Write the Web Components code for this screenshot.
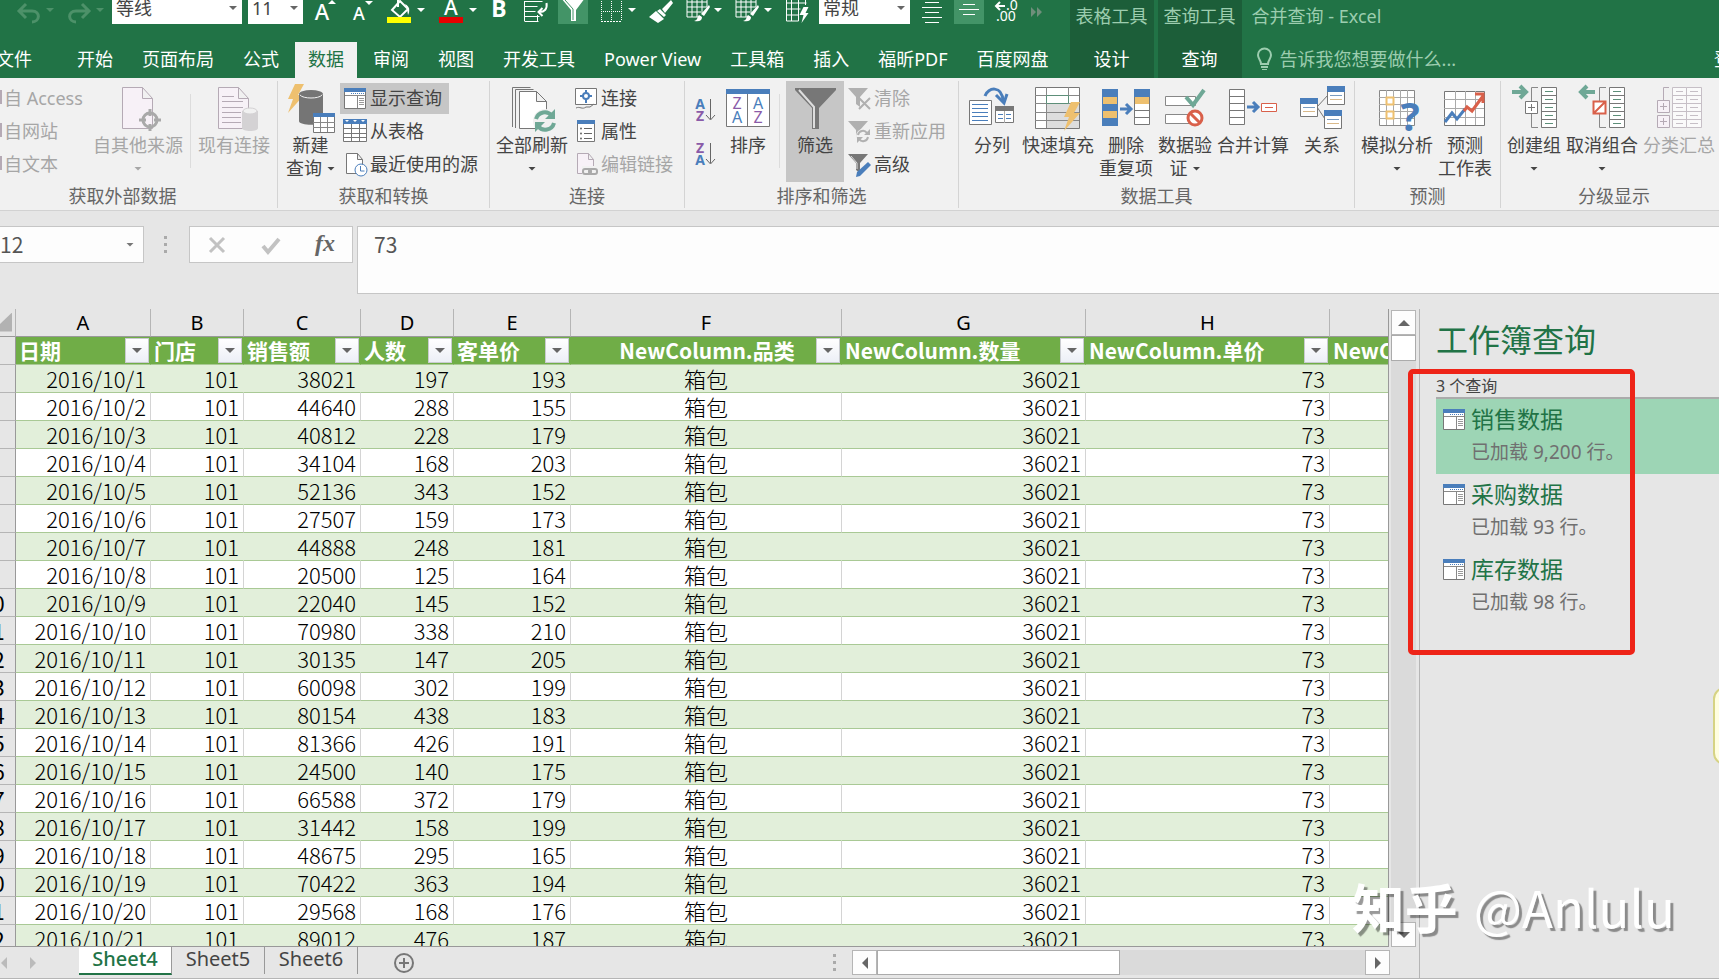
<!DOCTYPE html>
<html lang="zh-CN">
<head>
<meta charset="UTF-8">
<title>合并查询 - Excel</title>
<style>
  html, body { margin: 0; height: 100%; }
  body {
    background: #e6e6e6;
    color: #444;
    font: 18px/24px "Noto Sans", "Noto Sans CJK SC", sans-serif;
    overflow: hidden;
  }
</style>
</head>
<body>
<excel-app>
  <app-header slot="header"></app-header>
  <excel-ribbon slot="ribbon">
    <ribbon-group label="获取外部数据" style="--w: 278px; --pad: 0; --gap: 7px; --label-pad: 32px">
      <ribbon-column style="--w: 86px">
        <small-button icon="sliver" cut off>自 Access</small-button>
        <small-button icon="sliver" cut off>自网站</small-button>
        <small-button icon="sliver" cut off>自文本</small-button>
      </ribbon-column>
      <big-button icon="source" off caret>自其他来源</big-button>
      <ribbon-line></ribbon-line>
      <big-button icon="existing" off>现有连接</big-button>
    </ribbon-group>
    <ribbon-group label="获取和转换" style="--w: 212px; --pad: 8px; --gap: 5px">
      <big-button icon="newquery" line2="查询" caret narrow>新建</big-button>
      <ribbon-column>
        <small-button icon="pane" active>显示查询</small-button>
        <small-button icon="table">从表格</small-button>
        <small-button icon="recent">最近使用的源</small-button>
      </ribbon-column>
    </ribbon-group>
    <ribbon-group label="连接" style="--w: 195px; --pad: 6px; --gap: 3px">
      <big-button icon="refresh" caret>全部刷新</big-button>
      <ribbon-column>
        <small-button icon="link">连接</small-button>
        <small-button icon="props">属性</small-button>
        <small-button icon="editlink" off>编辑链接</small-button>
      </ribbon-column>
    </ribbon-group>
    <ribbon-group label="排序和筛选" style="--w: 274px; --pad: 8px; --gap: 6px">
      <sort-buttons></sort-buttons>
      <big-button icon="sort">排序</big-button>
      <ribbon-line></ribbon-line>
      <ribbon-row>
        <big-button icon="filter" active>筛选</big-button>
        <ribbon-column>
          <small-button icon="clear" off>清除</small-button>
          <small-button icon="reapply" off>重新应用</small-button>
          <small-button icon="advanced">高级</small-button>
        </ribbon-column>
      </ribbon-row>
    </ribbon-group>
    <ribbon-group label="数据工具" style="--w: 396px; --pad: 8px; --gap: 5px">
      <big-button icon="split">分列</big-button>
      <big-button icon="flash">快速填充</big-button>
      <big-button icon="dedupe" line2="重复项">删除</big-button>
      <big-button icon="validate" line2="证" caret>数据验</big-button>
      <big-button icon="consolidate">合并计算</big-button>
      <big-button icon="relation" wide>关系</big-button>
    </ribbon-group>
    <ribbon-group label="预测" style="--w: 146px; --pad: 6px; --gap: 5px">
      <big-button icon="whatif" caret>模拟分析</big-button>
      <big-button icon="forecast" line2="工作表">预测</big-button>
    </ribbon-group>
    <ribbon-group label="分级显示" style="--w: 227px; --pad: 6px; --gap: 5px">
      <big-button icon="group" caret>创建组</big-button>
      <big-button icon="ungroup" caret>取消组合</big-button>
      <big-button icon="subtotal" off>分类汇总</big-button>
    </ribbon-group>
  </excel-ribbon>
  <formula-bar slot="formula"></formula-bar>
  <sheet-grid slot="sheet"></sheet-grid>
  <query-pane slot="pane" heading="工作簿查询" count="3 个查询">
    <query-item name="销售数据" selected>已加载 9,200 行。</query-item>
    <query-item name="采购数据">已加载 93 行。</query-item>
    <query-item name="库存数据">已加载 98 行。</query-item>
  </query-pane>
</excel-app>

<script>
  const BLUE = '#4a7ebb';
  const GOLD = '#eec06f';
  const GREEN = '#6fa896';
  const RED = '#d9604a';

  const BOLT = 'M8 0h9l-6 11h6L1 29l5-14H1z';
  const FUNNEL = 'M1 2h20l-8 9v10l-4-3v-7z';
  const TABLE_PENCIL = `<g stroke="#fff" fill="none"><path d="M2 0v20h14M2 5h20M2 10h20M2 15h16M7 0v20M12 0v20M17 0v14M22 0v10"/></g>
    <path d="M24 8l-8 9 3 2 6-9zM14 18c-2 2-1 5-5 6 5 1 8 0 8-4z" fill="#fff"/>`;

  // five stacked cells, used by the outline and data tool icons
  const cells = (x, y, w, h, stroke, dash) => {
    let s = `<g stroke="${stroke}" fill="#fff"><path d="M${x}.5 ${y}.5h${w}v${h * 5}h-${w}z"/>`;
    for (let i = 1; i < 5; i++) s += `<path d="M${x} ${y + h * i}.5h${w}"/>`;
    if (dash) for (let i = 0; i < 5; i++) s += `<path d="M${x + 4} ${y + h * i + 4}.5h${w - 7}" stroke="${dash}"/>`;
    return s + '</g>';
  };
  const win = (x, y) => `<path d="M${x}.5 ${y}.5h17v18h-17z" fill="#fff" stroke="#777"/><path d="M${x} ${y}h18v6h-18z" fill="${BLUE}"/>
    <path d="M${x + 3} ${y + 9}.5h12" stroke="#7a9cc0"/><path d="M${x + 3} ${y + 13}.5h12" stroke="#d9b98a"/>`;
  const letter = (ch, x, y, color, size, weight = 400) =>
    `<text x="${x}" y="${y}" font-size="${size}" font-weight="${weight}" fill="${color}" text-anchor="middle" font-family="Noto Sans, sans-serif">${ch}</text>`;

  const icons = {
    // quick access toolbar, 26 x 26
    undo: `<path d="M4 14h12c9 0 8 11 0 11M10 7l-7 7 7 7" fill="none" stroke="#4d9169" stroke-width="3"/>`,
    redo: `<path d="M22 14H10c-9 0-8 11 0 11M16 7l7 7-7 7" fill="none" stroke="#4d9169" stroke-width="3"/>`,
    grow: letter('A', 12, 23, '#fff', 22, 500) + '<path d="M18 7l4-4 4 4z" fill="#fff"/>',
    shrink: letter('A', 13, 23, '#fff', 18, 500) + '<path d="M19 4h8l-4 4z" fill="#fff"/>',
    fill: `<path d="M6 13l8-9 8 8-8 8zM12 2v8" fill="none" stroke="#fff" stroke-width="2"/><path d="M19 7c5 2 5 8 3 11-1-5-1-8-3-11z" fill="#fff"/><path d="M1 20h24v6H1z" fill="#ff0"/>`,
    color: letter('A', 13, 18, '#fff', 21, 500) + '<path d="M1 20h24v6H1z" fill="#e60000"/>',
    bold: letter('B', 13, 20, '#fff', 23, 700),
    wrap: `<path d="M2 4.500h18M2 9.500h13M2 14.500h11M2 19.500h15M2 24.500h14M2 4v20M15 18v6" stroke="#fff" fill="none"/><path d="M24 6c1 6-2 9-7 9M20 11l-4 4 4 4" stroke="#fff" stroke-width="2" fill="none"/>`,
    funnel: `<path d="M1 3h24l-9 12v11h-5V15z" fill="#fff"/><path d="M5 5l8 9v11" stroke="#439467" fill="none"/>`,
    borders: `<path d="M3.500 0v24M13.500 0v24M23.500 0v24M3 14.500h20" stroke="#fff" stroke-dasharray="1 1" fill="none"/><path d="M3 24.500h21" stroke="#fff" stroke-dasharray="2 1"/>`,
    brush: `<path d="M24 3l-9 9 3 4 8-10zM13 12l6 6-2 2-7-6zM9 14l8 8-6 4-9-6z" fill="#fff"/>`,
    tablepen: TABLE_PENCIL,
    tablebolt: `<path d="M3 0v24h12M3 6h20M3 12h14M3 18h12M8 0v24M15 0v24M22 0v8" stroke="#fff" fill="none"/><path d="M20 10h5l-3 6h3l-7 10 2-8h-4z" fill="#fff"/>`,
    center: `<path d="M6 5.500h14M3 10.500h20M6 15.500h14M3 20.500h20M6 25.500h14" stroke="#fff"/>`,
    middle: `<path d="M7 9.500h12M3 14.500h20M7 19.500h12" stroke="#fff"/>`,
    decimals: `<path d="M13 9H4M8 5L4 9l4 4" stroke="#fff" stroke-width="2" fill="none"/>` + letter('.0', 20, 13, '#fff', 14) + letter('.00', 14, 24, '#fff', 14),
    more: `<path d="M8 10l5 5-5 5zM14 10l5 5-5 5z" fill="#6f8f7b"/>`,
    bulb: `<path d="M9 17c0-4-3-5-3-9a6 6 0 0 1 13 0c0 4-3 5-3 9z" fill="none" stroke="#9ccdaf" stroke-width="2"/><path d="M9 19h7v2H9zM10 22h5v1h-5z" fill="#9ccdaf"/>`,

    // large ribbon icons, 48 x 49
    source: `<path d="M8.500 2.500h20l10 11v30h-30zM28.500 2.500v11h10" fill="#f7f1f7" stroke="#b5aab5"/>
      <circle cx="36" cy="35" r="7" fill="none" stroke="#a9a9a9" stroke-width="3"/><path d="M36 24v7M36 39v7M25 35h7M40 35h7" stroke="#a9a9a9" stroke-width="3"/>`,
    existing: `<path d="M8.500 2.500h20l10 11v30h-30zM28.500 2.500v11h10" fill="#f7f1f7" stroke="#b5aab5"/>
      <path d="M12 11.500h12M12 16.500h21M12 22.500h21M12 27.500h19M12 32.500h19M12 37.500h19" stroke="#b5aab5"/>
      <path d="M32 26v17c0 4 16 4 16 0V26z" fill="#d4d2d4"/><ellipse cx="40" cy="26" rx="7" ry="3" fill="#f1f1f1" stroke="#d4d2d4"/>`,
    newquery: `<path d="${BOLT}" transform="translate(0 -1)" fill="${GOLD}"/>
      <path d="M12 10v26c0 5 24 5 24 0V10z" fill="#757575"/><ellipse cx="24" cy="9" rx="12" ry="4" fill="#757575"/><path d="M13 10c3 4 19 4 22 0" stroke="#f1f1f1" fill="none"/>
      <path d="M26.500 28.500h21v19h-21z" fill="#fff" stroke="#777"/><path d="M26 28h22v4H26z" fill="${BLUE}"/><path d="M26 37.500h22M26 42.500h22M33.500 32v15M40.500 32v15" stroke="#888"/>`,
    refresh: `<path d="M4.500 42V2.500h18M7.500 43V4.500h18" fill="none" stroke="#777"/><path d="M11.500 6.500h17l10 10v27h-27zM28.500 6.500v10h10" fill="#fff" stroke="#777"/>
      <circle cx="37" cy="36" r="12" fill="#f1f1f1"/><path d="M28 34a9 9 0 0 1 16-3M46 38a9 9 0 0 1-16 3" fill="none" stroke="${GREEN}" stroke-width="4"/><path d="M47 24v10H37zM27 47V37h10z" fill="${GREEN}"/>`,
    sort: `<path d="M2.500 4.500h43v37h-43zM23.500 9v32" fill="#fff" stroke="#777"/><path d="M2 4h44v5H2z" fill="${BLUE}"/>`
      + letter('Z', 13, 24, '#8a5ba8', 16) + letter('A', 13, 38, BLUE, 16) + letter('A', 34, 24, BLUE, 16) + letter('Z', 34, 38, '#8a5ba8', 16),
    filter: `<path d="M4 3h41v2L28 23v21h-7V23L4 5z" fill="#777"/><path d="M8 5l15 17v21" stroke="#ddd" stroke-width="2" fill="none"/>`,
    split: `<path d="M1.500 15.500h22v24h-22z" fill="#fff" stroke="#777"/><path d="M4 19.500h16M4 23.500h16M4 27.500h16M4 31.500h16M4 35.500h16" stroke="${BLUE}"/>
      <path d="M17 11c3-9 17-11 18 5" fill="none" stroke="${BLUE}" stroke-width="3"/><path d="M28 10l8 8 3-9" fill="none" stroke="${BLUE}" stroke-width="3"/>
      <path d="M27.500 21.500h18v16h-18z" fill="#fff" stroke="#777"/><path d="M27 21h19v5H27z" fill="#777"/><path d="M30 29.500h5M38 29.500h5M30 33.500h5M38 33.500h5" stroke="${BLUE}"/><path d="M36.500 26v12" stroke="#aaa"/>`,
    flash: `<path d="M1.500 2.500h44v41h-44z" fill="#fff" stroke="#777"/><path d="M12 19h33v24H12z" fill="#ddd"/>
      <path d="M1 10.500h44M1 18.500h44M1 27.500h44M1 35.500h44M12.500 2v41M34.500 2v17" stroke="#888" fill="none"/><path d="M12.500 10.500h22v8h-22z" fill="#fff" stroke="#5d8f79"/>
      <path d="${BOLT}" transform="translate(29 17)" fill="${GOLD}"/>`,
    dedupe: `<path d="M0 4h16v37H0z" fill="${BLUE}"/><path d="M1 12h14v7H1zM1 26h14v7H1z" fill="${GOLD}"/>
      <path d="M18 24h10M24 19l5 5-5 5" stroke="${BLUE}" stroke-width="3" fill="none"/>` + cells(32, 4, 15, 7, '#777')
      + `<path d="M32 4h16v8H32z" fill="${BLUE}"/><path d="M33 12h14v7H33z" fill="${GOLD}"/>`,
    validate: `<path d="M4.500 11.500h30v9h-30zM4.500 29.500h28v9h-28z" fill="#fff" stroke="#888"/><path d="M25 12l7 8L43 5" fill="none" stroke="${GREEN}" stroke-width="4"/>
      <circle cx="34" cy="33" r="7" fill="#fff" stroke="${RED}" stroke-width="3"/><path d="M29 28l10 10" stroke="${RED}" stroke-width="3"/>`,
    consolidate: cells(0, 4, 15, 7, '#777') + `<path d="M18 22h10M24 17l5 5-5 5" stroke="${BLUE}" stroke-width="3" fill="none"/>
      <path d="M32.500 18.500h15v8h-15z" fill="#fff" stroke="${RED}"/><path d="M36 22.500h8" stroke="${RED}"/>`,
    relation: `<path d="M19 22L30 10M19 22l8 12" stroke="#777"/>` + win(2, 13) + win(29, 1) + win(26, 25),
    whatif: `<path d="M6.500 5.500h35v35h-35z" fill="#fff" stroke="#888"/><path d="M6 12.500h35M6 19.500h35M6 26.500h35M6 33.500h35M13.500 5v35M20.500 5v35M27.500 5v35M34.500 5v35" stroke="#aaa"/>
      <path d="M13.500 12.500h7v7h-7zM13.500 26.500h7v7h-7z" fill="#fff" stroke="${GOLD}" stroke-width="2"/>` + letter('?', 37, 46, BLUE, 40, 700),
    forecast: `<path d="M3.500 6.500h40v34h-40z" fill="#fff" stroke="#777"/><path d="M3 14.500h40M3 23.500h40M3 32.500h40M14.500 6v34M24.500 6v34M34.500 6v34" stroke="#aaa"/>
      <path d="M4 37l7-9 5 6 8-10" fill="none" stroke="${BLUE}" stroke-width="3"/><path d="M23 26l3-4 5 4 11-15M34 9h8v9" fill="none" stroke="${RED}" stroke-width="3"/>`,
    group: `<path d="M2 7h13M10 1l6 6-6 6" stroke="${GREEN}" stroke-width="4" fill="none"/><path d="M28 2.500h-6.500V16M21.500 28v14.500H28" stroke="#888" fill="none"/>
      <path d="M15.500 16.500h12v12h-12z" fill="#fff" stroke="#777"/><path d="M18 22.500h7M21.500 19v7" stroke="#777"/>` + cells(31, 2, 15, 8, '#777', '#5d8f79'),
    ungroup: `<path d="M17 7H4M9 1L3 7l6 6" stroke="${GREEN}" stroke-width="4" fill="none"/><path d="M28 2.500h-6.500V16M21.500 28v14.500H28" stroke="#888" fill="none"/>
      <path d="M15.500 16.500h12v12h-12zM15.500 28.500l12-12" fill="#fff" stroke="${RED}" stroke-width="2"/>` + cells(31, 2, 15, 8, '#777', '#5d8f79'),
    subtotal: `<path d="M14 2.500H8.500V15" stroke="#b5aab5" fill="none"/><path d="M2.500 15.500h12v12h-12zM2.500 30.500h12v12h-12zM5 21.500h7M8.500 18v7M5 36.500h7M8.500 33v7" fill="#f7f1f7" stroke="#b5aab5"/>
      <g opacity=".7">` + cells(17, 2, 14, 8, '#b5aab5', '#b5aab5') + cells(31, 2, 15, 8, '#b5aab5', '#b5aab5') + '</g>',

    // small ribbon icons, 24 x 24
    sliver: `<path d="M0 4h2v14H0z" fill="#b5aab5"/>`,
    pane: `<path d="M1.500 2.500h21v20h-21z" fill="#fff" stroke="#777"/><path d="M1 2h22v4H1z" fill="${BLUE}"/><path d="M8 7.500h13" stroke="${BLUE}" stroke-dasharray="1 1"/>
      <path d="M2 9.500h20M14.500 10v12" stroke="#888"/><path d="M16 12.500h5M16 14.500h5M16 16.500h5M16 18.500h5" stroke="#999"/>`,
    table: `<path d="M.500 1.500h23v21H.500z" fill="#fff" stroke="#777"/><path d="M0 0h24v5H0z" fill="${BLUE}"/><path d="M2 1h4L4 3zM10 1h4l-2 2zM18 1h4l-2 2z" fill="#fff"/>
      <path d="M0 9.500h24M0 14.500h24M0 18.500h24M8.500 5v18M16.500 5v18" stroke="#777"/>`,
    recent: `<path d="M3.500 1.500h11l5 6v14h-16zM14.500 1.500v6h5" fill="#fff" stroke="#777"/><circle cx="18" cy="18" r="6" fill="#fff" stroke="${BLUE}"/><path d="M17.500 14v5h4" stroke="${BLUE}" fill="none"/>`,
    link: `<path d="M1.500 2.500h21v16h-21z" fill="#fff" stroke="#777"/><circle cx="12" cy="10" r="3" fill="none" stroke="${BLUE}" stroke-width="2"/><path d="M12 4v4M12 12v5M6 10h3M15 10h3" stroke="${BLUE}" stroke-width="2"/><path d="M2 22c4-2 6 2 10-1h4l4-3" stroke="#777" fill="none"/>`,
    props: `<path d="M3.500 2.500h17v20h-17z" fill="#fff" stroke="#777"/><path d="M3 1h18v4H3z" fill="${BLUE}"/><path d="M10 9.500h8M10 14.500h8M10 19.500h8" stroke="#666"/><circle cx="7" cy="9.500" r="1" fill="#666"/><circle cx="7" cy="14.500" r="1" fill="#666"/><circle cx="7" cy="19.500" r="1" fill="#666"/>`,
    editlink: `<path d="M3.500 1.500h11l5 6v14h-16zM14.500 1.500v6h5" fill="#f7f1f7" stroke="#b5aab5"/><path d="M8 14h16v9H8z" fill="#f1f1f1"/><rect x="9" y="17" width="8" height="5" rx="2" fill="none" stroke="#a9a9a9" stroke-width="2"/><rect x="15" y="17" width="8" height="5" rx="2" fill="none" stroke="#a9a9a9" stroke-width="2"/>`,
    clear: `<path d="${FUNNEL}" fill="#b0b0b0"/><path d="M12 12l11 11M23 12L12 23" stroke="#b0b0b0" stroke-width="2"/>`,
    reapply: `<path d="${FUNNEL}" fill="#b0b0b0"/><circle cx="16" cy="17" r="7" fill="#f1f1f1"/><path d="M11 16a5 5 0 0 1 9-2M21 18a5 5 0 0 1-9 2" stroke="#b0b0b0" stroke-width="2" fill="none"/><path d="M23 10v6h-6zM10 24v-6h6z" fill="#b0b0b0"/>`,
    advanced: `<path d="${FUNNEL}" fill="#777"/><path d="M4 4l6 7v6" stroke="#ddd" fill="none"/><path d="M21 10l3 3-11 11-4 1 1-5z" fill="${BLUE}"/>`,
    az: letter('A', 7, 11, BLUE, 14, 700) + letter('Z', 7, 23, '#8a5ba8', 14, 700) + '<path d="M17.500 1v20M13 17l4.500 5 4.500-5" stroke="#666" fill="none"/>',
    za: letter('Z', 7, 11, '#8a5ba8', 14, 700) + letter('A', 7, 23, BLUE, 14, 700) + '<path d="M17.500 1v20M13 17l4.500 5 4.500-5" stroke="#666" fill="none"/>',
    cancel: '<path d="M5 5l14 14M19 5L5 19" stroke="#c2c2c2" stroke-width="3" fill="none"/>',
    accept: '<path d="M4 13l5 6L20 6" stroke="#c2c2c2" stroke-width="4" fill="none"/>',
    plus: '<circle cx="12" cy="12" r="9" fill="none" stroke="#777" stroke-width="2"/><path d="M7 12h10M12 7v10" stroke="#777" stroke-width="2"/>',
    left: '<path d="M15 6v12l-6-6z" fill="currentColor"/>',
    right: '<path d="M9 6v12l6-6z" fill="currentColor"/>',
    up: '<path d="M6 15h12l-6-6z" fill="currentColor"/>',
    down: '<path d="M6 9h12l-6 6z" fill="currentColor"/>'
  };

  const icon = (name, w = 24, h = w) => `<svg width="${w}" height="${h}" viewBox="0 0 ${w} ${h}" aria-hidden="true">${icons[name]}</svg>`;

  const base = `
    *, *::before { box-sizing: border-box; }
    svg { display: block; flex: none; overflow: visible; }
    button, select, input { font: inherit; color: inherit; margin: 0; padding: 0; border: 0; background: none; border-radius: 0; }
    button { display: flex; align-items: center; justify-content: center; white-space: nowrap; }
    .caret { display: inline-block; width: 8px; height: 4px; background: currentColor; clip-path: polygon(0 0, 100% 0, 50% 100%); }
  `;

  class BaseElement extends HTMLElement {
    constructor() {
      super();
      this.shadow = this.attachShadow({ mode: 'open' });
    }

    connectedCallback() {
      this.shadow.innerHTML = `<style>${base}${this.styles()}</style>${this.render()}`;
    }

    styles() { return ''; }
    render() { return '<slot></slot>'; }
  }

  class ExcelApp extends BaseElement {
    styles() {
      return `
        :host { display: flex; flex-direction: column; height: 100vh; position: relative; overflow: hidden; }
        .work { flex: 1; min-height: 0; display: flex; }
        .sheet { flex: 1; min-width: 0; display: flex; }
        .sheet ::slotted(*) { flex: 1; min-width: 0; }
        .mark {
          position: absolute; right: 44px; bottom: 41px; display: flex; align-items: center; gap: 16px;
          color: #fff; font: 51px/64px "Noto Sans CJK SC", sans-serif; text-shadow: 3px 3px 1px #0006; white-space: nowrap;
        }
        .mark b { font-size: 53px; font-weight: 700; }
        .tip { position: absolute; right: -30px; top: 687px; width: 36px; height: 78px; border: 2px solid #d6d384; border-radius: 12px; background: #fffee0; }
      `;
    }
    render() {
      return `
        <slot name="header"></slot>
        <slot name="ribbon"></slot>
        <slot name="formula"></slot>
        <div class="work">
          <div class="sheet"><slot name="sheet"></slot></div>
          <slot name="pane"></slot>
        </div>
        <div class="tip"></div>
        <div class="mark"><b>知乎</b><span>@Anlulu</span></div>
      `;
    }
  }

  class AppHeader extends BaseElement {
    styles() {
      return `
        :host { display: flex; height: 78px; background: #217346; color: #fff; overflow: hidden; }
        .left { display: flex; flex-direction: column; justify-content: space-between; padding-right: 8px; }
        .qat { display: flex; align-items: flex-end; gap: 6px; height: 24px; padding-left: 12px; }
        .qat button, .box { width: var(--w); height: 32px; flex: none; }
        .qat button { height: 28px; }
        .qat button svg { flex: 1; width: 26px; }
        .qat .caret { margin-right: 2px; }
        .qat .on { background: #439467; height: 32px; }
        .qat .dim .caret { background: #4d9169; }
        .box { display: grid; align-items: center; background: #fff; color: #444; }
        .box select { grid-area: 1 / 1; width: 100%; height: 32px; padding: 0 0 0 4px; appearance: none; }
        .box .caret { grid-area: 1 / 1; justify-self: end; margin-right: 5px; background: #666; pointer-events: none; }
        .tabs { display: flex; gap: 3px; }
        .tabs button { height: 36px; padding: 0 13px 3px; }
        .tabs .file { width: 32px; padding: 0 0 3px; margin-right: 29px; justify-content: flex-end; }
        .tabs .active { background: #f1f1f1; color: #217346; }
        .context { display: flex; flex-direction: column; justify-content: space-between; align-items: center; width: 84px; margin-right: 4px; background: #1c5e39; }
        .context span { line-height: 32px; color: #9ccdaf; }
        .context button { height: 36px; width: 100%; padding-bottom: 3px; }
        .right { flex: 1; display: flex; flex-direction: column; justify-content: space-between; padding-left: 6px; color: #9ccdaf; }
        .title { line-height: 32px; }
        .tell { display: flex; align-items: center; justify-content: space-between; height: 36px; padding-bottom: 3px; }
        .tell label { display: flex; align-items: center; gap: 4px; }
        .tell input { width: 260px; }
        .tell input::placeholder { color: #9ccdaf; opacity: 1; }
        .login { width: 5px; overflow: hidden; justify-content: flex-start; color: #fff; }
      `;
    }
    render() {
      const tool = (name, w, label, caret, cls = '') =>
        `<button class="${cls}" style="--w: ${w}px" aria-label="${label}">${icon(name, 26)}${caret ? '<span class="caret"></span>' : ''}</button>`;
      const box = (value, w, label) =>
        `<div class="box" style="--w: ${w}px"><select aria-label="${label}"><option>${value}</option></select><span class="caret"></span></div>`;
      const tabs = ['开始', '页面布局', '公式', '数据', '审阅', '视图', '开发工具', 'Power View', '工具箱', '插入', '福昕PDF', '百度网盘'];
      return `
        <div class="left">
          <div class="qat">
            ${tool('undo', 44, '撤消', true, 'dim')}
            ${tool('redo', 44, '恢复', true, 'dim')}
            ${box('等线', 130, '字体')}
            ${box('11', 55, '字号')}
            ${tool('grow', 28, '增大字号')}
            ${tool('shrink', 32, '减小字号')}
            ${tool('fill', 46, '填充颜色', true)}
            ${tool('color', 46, '字体颜色', true)}
            ${tool('bold', 28, '加粗')}
            ${tool('wrap', 33, '自动换行')}
            ${tool('funnel', 30, '筛选', false, 'on')}
            ${tool('borders', 44, '边框', true)}
            ${tool('brush', 32, '格式刷')}
            ${tool('tablepen', 42, '绘制表格', true)}
            ${tool('tablepen', 44, '套用格式', true)}
            ${tool('tablebolt', 33, '快速分析')}
            ${box('常规', 91, '数字格式')}
            ${tool('center', 32, '居中')}
            ${tool('middle', 30, '垂直居中', false, 'on')}
            ${tool('decimals', 30, '增加小数位数')}
            ${tool('more', 20, '其他')}
          </div>
          <nav class="tabs">
            <button class="file">文件</button>
            ${tabs.map(t => `<button class="${t === '数据' ? 'active' : ''}">${t}</button>`).join('')}
          </nav>
        </div>
        <div class="context"><span>表格工具</span><button>设计</button></div>
        <div class="context"><span>查询工具</span><button>查询</button></div>
        <div class="right">
          <div class="title">合并查询 - Excel</div>
          <div class="tell">
            <label>${icon('bulb', 24)}<input placeholder="告诉我您想要做什么..." aria-label="告诉我您想要做什么"></label>
            <button class="login">登录</button>
          </div>
        </div>
      `;
    }
  }

  class ExcelRibbon extends BaseElement {
    styles() {
      return `:host { display: flex; height: 133px; box-sizing: border-box; padding-top: 3px; background: #f1f1f1; border-bottom: 1px solid #d2d2d2; overflow: hidden; }`;
    }
  }

  class RibbonGroup extends BaseElement {
    styles() {
      return `
        :host { display: flex; flex-direction: column; justify-content: space-between; flex: none; box-sizing: border-box; width: var(--w); height: 127px; border-right: 1px solid #d4d4d4; }
        .items { display: flex; gap: var(--gap); height: 101px; padding-left: var(--pad); }
        .label { text-align: center; padding-right: var(--label-pad, 0); color: #666; white-space: nowrap; }
      `;
    }
    render() {
      return `<div class="items"><slot></slot></div><div class="label">${this.getAttribute('label')}</div>`;
    }
  }

  class RibbonColumn extends BaseElement {
    styles() {
      return `:host { display: flex; flex-direction: column; align-items: flex-start; gap: 2px; padding-top: 2px; width: var(--w, auto); }`;
    }
    connectedCallback() {
      // the group's own width must not be taken over by a column inside it
      if (!this.style.getPropertyValue('--w')) this.style.setProperty('--w', 'auto');
      super.connectedCallback();
    }
  }

  class RibbonRow extends BaseElement {
    styles() { return ':host { display: flex; }'; }
  }

  class RibbonLine extends BaseElement {
    styles() { return ':host { width: 1px; height: 74px; margin: 13px 0 0; background: #dcdcdc; }'; }
    render() { return ''; }
  }

  class BigButton extends BaseElement {
    styles() {
      return `
        :host { display: block; }
        button { flex-direction: column; justify-content: flex-start; min-width: 50px; height: 101px; padding-top: 4px; line-height: 23px; }
        :host([narrow]) button { min-width: 48px; }
        :host([wide]) button { min-width: 56px; }
        :host([off]) { color: #a6a6a6; }
        :host([active]) button { width: 58px; background: #c6c6c6; }
        .second { display: flex; align-items: center; gap: 5px; height: 23px; }
      `;
    }
    render() {
      return `
        <button>
          ${icon(this.getAttribute('icon'), 48, 49)}
          <slot></slot>
          <span class="second">${this.getAttribute('line2') || ''}${this.hasAttribute('caret') ? '<span class="caret"></span>' : ''}</span>
        </button>
      `;
    }
  }

  class SmallButton extends BaseElement {
    styles() {
      return `
        :host { display: block; }
        button { height: 31px; padding: 0 7px 2px 3px; gap: 3px; }
        :host([off]) { color: #a6a6a6; }
        :host([active]) button { background: #c6c6c6; }
        :host([cut]) button { padding: 0 0 2px; gap: 0; }
      `;
    }
    render() {
      const w = this.hasAttribute('cut') ? 4 : 24;
      return `<button>${icon(this.getAttribute('icon'), w, 24)}<slot></slot></button>`;
    }
  }

  class SortButtons extends BaseElement {
    styles() {
      return `
        :host { display: flex; flex-direction: column; gap: 18px; padding-top: 16px; }
        button { width: 24px; height: 26px; }
      `;
    }
    render() {
      return `<button aria-label="升序">${icon('az')}</button><button aria-label="降序">${icon('za')}</button>`;
    }
  }

  class FormulaBar extends BaseElement {
    styles() {
      return `
        :host { display: flex; align-items: flex-start; height: 98px; box-sizing: border-box; padding-top: 15px; font-family: "Noto Sans CJK SC", sans-serif; font-size: 21px; color: #555; }
        .name { display: flex; align-items: center; width: 144px; height: 37px; background: #fdfdfd; border: 1px solid #c6c6c6; border-left: 0; }
        .name input { flex: 1; width: 0; padding-bottom: 2px; }
        .name .caret { margin-right: 9px; background: #777; }
        .dots { display: grid; gap: 4px; width: 43px; height: 37px; align-content: center; justify-content: center; margin-right: 2px; }
        .dots i { width: 3px; height: 3px; background: #aaa; }
        .tools { display: flex; align-items: center; justify-content: space-around; width: 164px; height: 37px; background: #fdfdfd; border: 1px solid #c6c6c6; margin-right: 4px; }
        .fx { font: italic bold 24px/30px "Liberation Serif", serif; color: #666; width: 24px; padding-bottom: 3px; }
        .formula { flex: 1; height: 68px; padding: 2px 16px 34px; background: #fdfdfd; border: 1px solid #c6c6c6; border-right: 0; }
      `;
    }
    render() {
      return `
        <div class="name"><input value="12" aria-label="名称框"><span class="caret"></span></div>
        <div class="dots"><i></i><i></i><i></i></div>
        <div class="tools">
          <button aria-label="取消">${icon('cancel')}</button>
          <button aria-label="输入">${icon('accept')}</button>
          <button class="fx" aria-label="插入函数">fx</button>
        </div>
        <input class="formula" value="73" aria-label="编辑栏">
      `;
    }
  }

  const columns = [
    ['A', 135, '日期'], ['B', 93, '门店'], ['C', 117, '销售额'], ['D', 93, '人数'], ['E', 117, '客单价'],
    ['F', 271, 'NewColumn.品类'], ['G', 244, 'NewColumn.数量'], ['H', 244, 'NewColumn.单价'], ['', 244, 'NewColumn.金额']
  ];

  // sales, customers, average price; one row per day from 2016/10/1
  const days = [
    [38021, 197, 193], [44640, 288, 155], [40812, 228, 179], [34104, 168, 203], [52136, 343, 152], [27507, 159, 173],
    [44888, 248, 181], [20500, 125, 164], [22040, 145, 152], [70980, 338, 210], [30135, 147, 205], [60098, 302, 199],
    [80154, 438, 183], [81366, 426, 191], [24500, 140, 175], [66588, 372, 179], [31442, 158, 199], [48675, 295, 165],
    [70422, 363, 194], [29568, 168, 176], [89012, 476, 187]
  ];

  class SheetGrid extends BaseElement {
    styles() {
      return `
        :host { display: flex; flex-direction: column; color: #000; }
        .main { flex: 1; min-height: 0; display: flex; gap: 2px; padding-right: 3px; }
        .view { flex: 1; min-width: 0; overflow: hidden; border-right: 1px solid #999; border-bottom: 1px solid #999; }
        table { width: 1573px; table-layout: fixed; border-collapse: separate; border-spacing: 0; font: 300 22px/27px "Noto Sans CJK SC", sans-serif; }
        th, td { height: 28px; padding: 0 4px; border-right: 1px solid #d4d4d4; border-bottom: 1px solid #a9c995; white-space: nowrap; }
        td { text-align: right; background: #fff; }
        td.mid { text-align: center; }
        tbody tr:nth-child(odd) td { background: #e2efda; border-right-color: #e2efda; }
        .letters th { font: 400 20px/27px "Noto Sans", sans-serif; border-right-color: #b5b5b5; border-bottom-color: #999; background: #e6e6e6; }
        .letters th:first-child { padding: 3px 2px 4px 0; }
        .corner { display: block; width: 12px; height: 19px; background: #b2b2b2; clip-path: polygon(100% 0, 100% 100%, 0 100%, 0 60%); }
        .row { padding: 0; font-weight: 400; background: #e6e6e6; border-color: #b5b5b5; border-right-color: #999; }
        .row span { display: block; width: 45px; margin-left: -30px; text-align: center; }
        .field { padding: 0 1px 0 3px; background: #70ad47; border-right-color: #70ad47; font-size: 21px; font-weight: 700; color: #fff; text-align: left; }
        .field div { display: grid; align-items: center; }
        .field span, .field button { grid-area: 1 / 1; }
        .field.mid span { text-align: center; }
        .field button { justify-self: end; width: 24px; height: 25px; background: linear-gradient(#fff, #eceff6); border: 1px solid #c9cbd0; color: #666; }
        .field .caret { width: 10px; height: 5px; }
        .vscroll { display: flex; flex-direction: column; width: 25px; margin-top: 1px; background: #dadada; }
        .vscroll button, .hscroll button { width: 25px; height: 25px; background: #fdfdfd; border: 1px solid #b5b5b5; color: #666; }
        .vscroll .rest { flex: 1; }
        .thumb { background: #fff; border: 1px solid #ababab; }
        .vscroll .thumb { height: 26px; }
        .bottom { display: flex; align-items: flex-start; height: 32px; border-bottom: 1px solid #b5b5b5; font-size: 20px; }
        .nav { display: flex; align-items: center; gap: 5px; width: 79px; height: 32px; color: #bbb; overflow: hidden; }
        .nav svg:first-child { margin-left: -8px; }
        .tab { width: 93px; height: 27px; line-height: 24px; align-items: flex-start; border-right: 1px solid #999; color: #444; }
        .tab.on { background: #fff; color: #217346; height: 28px; border-bottom: 2px solid #217346; font-weight: 500; }
        .add { margin: 4px auto 0 34px; }
        .dots { display: grid; gap: 4px; height: 31px; width: 17px; margin-right: 9px; align-content: center; justify-content: center; }
        .dots i { width: 3px; height: 3px; background: #aaa; }
        .hscroll { display: flex; width: 538px; height: 25px; margin: 3px 29px 0 0; background: #dadada; }
        .hscroll .thumb { flex: 0 0 243px; }
        .hscroll .rest { flex: 1; }
      `;
    }
    render() {
      const rows = days.map((d, i) => `
        <tr>
          <th class="row" scope="row"><span>${i + 2}</span></th>
          <td>2016/10/${i + 1}</td><td>101</td><td>${d[0]}</td><td>${d[1]}</td><td>${d[2]}</td>
          <td class="mid">箱包</td><td>36021</td><td>73</td><td></td>
        </tr>`).join('');
      return `
        <div class="main">
          <div class="view">
            <table>
              <colgroup><col style="width: 16px">${columns.map(c => `<col style="width: ${c[1]}px">`).join('')}</colgroup>
              <thead>
                <tr class="letters"><th><span class="corner"></span></th>${columns.map(c => `<th>${c[0]}</th>`).join('')}</tr>
                <tr>
                  <th class="row"></th>
                  ${columns.map(c => `<th class="field ${c[0] === 'F' ? 'mid' : ''}"><div><span>${c[2]}</span><button aria-label="筛选"><i class="caret"></i></button></div></th>`).join('')}
                </tr>
              </thead>
              <tbody>${rows}</tbody>
            </table>
          </div>
          <div class="vscroll">
            <button aria-label="向上">${icon('up')}</button>
            <div class="thumb"></div>
            <div class="rest"></div>
            <button aria-label="向下">${icon('down')}</button>
          </div>
        </div>
        <div class="bottom">
          <div class="nav">${icon('left')}${icon('right')}</div>
          <button class="tab on">Sheet4</button>
          <button class="tab">Sheet5</button>
          <button class="tab">Sheet6</button>
          <button class="add" aria-label="新工作表">${icon('plus')}</button>
          <div class="dots"><i></i><i></i><i></i></div>
          <div class="hscroll">
            <button aria-label="向左">${icon('left')}</button>
            <div class="thumb"></div>
            <div class="rest"></div>
            <button aria-label="向右">${icon('right')}</button>
          </div>
        </div>
      `;
    }
  }

  class QueryPane extends BaseElement {
    styles() {
      return `
        :host { display: flex; flex-direction: column; flex: none; box-sizing: border-box; width: 300px; padding: 9px 0 0 16px; border-left: 1px solid #b5b5b5; border-bottom: 1px solid #b5b5b5; position: relative; }
        h1 { margin: 0 0 14px; font-size: 32px; line-height: 44px; font-weight: 400; color: #217346; }
        .count { font-size: 16px; line-height: 21px; border-bottom: 2px solid #ababab; }
        .frame { position: absolute; left: -12px; top: 60px; width: 227px; height: 286px; box-sizing: border-box; border: 5px solid #ee2418; border-radius: 5px; pointer-events: none; }
      `;
    }
    render() {
      return `
        <h1>${this.getAttribute('heading')}</h1>
        <div class="count">${this.getAttribute('count')}</div>
        <slot></slot>
        <div class="frame"></div>
      `;
    }
  }

  class QueryItem extends BaseElement {
    styles() {
      return `
        :host { display: flex; align-items: flex-start; gap: 5px; height: 75px; box-sizing: border-box; padding: 6px; }
        :host([selected]) { background: #9dd5b5; }
        svg { margin-top: 2px; }
        .name { font-size: 23px; line-height: 28px; color: #217346; }
        .state { font-size: 19px; line-height: 38px; color: #707070; white-space: nowrap; }
      `;
    }
    render() {
      return `${icon('pane')}<div><div class="name">${this.getAttribute('name')}</div><div class="state"><slot></slot></div></div>`;
    }
  }

  customElements.define('excel-app', ExcelApp);
  customElements.define('app-header', AppHeader);
  customElements.define('excel-ribbon', ExcelRibbon);
  customElements.define('ribbon-group', RibbonGroup);
  customElements.define('ribbon-column', RibbonColumn);
  customElements.define('ribbon-row', RibbonRow);
  customElements.define('ribbon-line', RibbonLine);
  customElements.define('big-button', BigButton);
  customElements.define('small-button', SmallButton);
  customElements.define('sort-buttons', SortButtons);
  customElements.define('formula-bar', FormulaBar);
  customElements.define('sheet-grid', SheetGrid);
  customElements.define('query-pane', QueryPane);
  customElements.define('query-item', QueryItem);
</script>
</body>
</html>
